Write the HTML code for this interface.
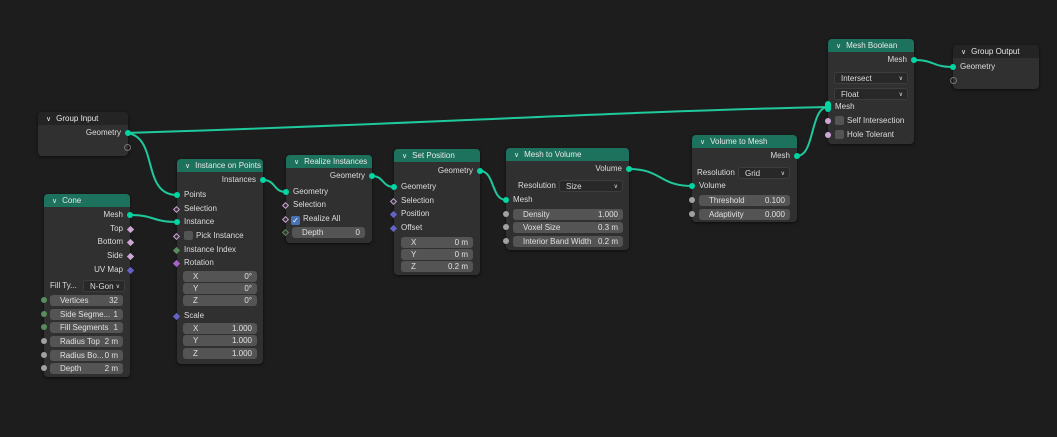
<!DOCTYPE html><html><head><style>
body{margin:0;width:1057px;height:437px;background:#1d1d1d;overflow:hidden;position:relative;font-family:"Liberation Sans",sans-serif;font-size:8px;color:#dcdcdc}
.n{position:absolute;background:#303030;border-radius:4px;box-shadow:0 1px 3px rgba(0,0,0,.6)}
.h{height:13px;line-height:13px;background:#1d725e;border-radius:4px 4px 0 0;padding-left:8px;color:#e8e8e8}
.h.g{background:#242424}
.h:before{content:"\2228";font-size:7px;margin-right:5px}
.r{position:absolute;left:0;right:0;height:12px;line-height:12px}
.o{text-align:right;padding-right:7px}
.i{padding-left:7px}
.s{position:absolute;width:6px;height:6px;border-radius:50%;top:3px}
.sl{left:-3px}.sr{right:-3px}
.d{position:absolute;width:3px;height:3px;transform:rotate(45deg);top:4px;border:1px solid;background:#303030}
.dl{left:-3px}.dr{right:-3px}
.f{position:absolute;height:11px;line-height:11px;background:#545454;border-radius:3px;padding:0 5px 0 10px;color:#e0e0e0;box-sizing:border-box}
.f span{float:right}
.dd{position:absolute;height:12px;line-height:12px;background:#282828;border:1px solid #3d3d3d;border-radius:3px;padding-left:6px;box-sizing:border-box}
.dd:after{content:"\2228";position:absolute;right:4px;font-size:6px}
.cb{display:inline-block;width:9px;height:9px;background:#545454;border-radius:2px;vertical-align:-2px;margin-right:3px}
.G{background:#00d6a3}.B{background:#cca6d6}.I{background:#598c5c}.F{background:#a1a1a1}.V{background:#6363c7}.R{background:#a663c7}
</style></head><body>
<svg width="1057" height="437" style="position:absolute;left:0;top:0" fill="none" stroke="#1fc99c" stroke-width="2">
<path d="M124 133 C400 125 600 112 828 107"/>
<path d="M124 133 C160 133 140 195 177 195"/>
<path d="M130 215 C155 215 152 222 177 222"/>
<path d="M263 180 C276 180 273 192 286 192"/>
<path d="M372 176 C384 176 382 187 394 187"/>
<path d="M480 171 C495 171 491 200 506 200"/>
<path d="M629 169 C662 169 659 186 692 186"/>
<path d="M797 156 C815 156 810 107 828 107"/>
<path d="M914 60 C935 60 932 67 953 67"/>
</svg>

<div class="n" style="left:38px;top:112px;width:90px;height:44px"><div class="h g">Group Input</div>
<div class="r o" style="top:15px">Geometry<i class="s sr G"></i></div>
<div class="r" style="top:29px"><i class="s sr" style="border:1px solid #777;width:5px;height:5px;background:none"></i></div></div>

<div class="n" style="left:177px;top:159px;width:86px;height:205px"><div class="h">Instance on Points</div>
<div class="r o" style="top:15px">Instances<i class="s sr G"></i></div>
<div class="r i" style="top:30px">Points<i class="s sl G"></i></div>
<div class="r i" style="top:44px">Selection<i class="d dl" style="border-color:#cca6d6"></i></div>
<div class="r i" style="top:57px">Instance<i class="s sl G"></i></div>
<div class="r i" style="top:71px"><i class="d dl" style="border-color:#cca6d6"></i><span class="cb"></span>Pick Instance</div>
<div class="r i" style="top:85px">Instance Index<i class="d dl I" style="border-color:#598c5c"></i></div>
<div class="r i" style="top:98px">Rotation<i class="d dl R" style="border-color:#a663c7"></i></div>
<div class="f" style="left:6px;width:74px;top:112px">X<span>0°</span></div>
<div class="f" style="left:6px;width:74px;top:124px">Y<span>0°</span></div>
<div class="f" style="left:6px;width:74px;top:136px">Z<span>0°</span></div>
<div class="r i" style="top:151px">Scale<i class="d dl V" style="border-color:#6363c7"></i></div>
<div class="f" style="left:6px;width:74px;top:164px">X<span>1.000</span></div>
<div class="f" style="left:6px;width:74px;top:176px">Y<span>1.000</span></div>
<div class="f" style="left:6px;width:74px;top:189px">Z<span>1.000</span></div></div>

<div class="n" style="left:44px;top:194px;width:86px;height:183px"><div class="h">Cone</div>
<div class="r o" style="top:15px">Mesh<i class="s sr G"></i></div>
<div class="r o" style="top:29px">Top<i class="d dr B" style="border-color:#cca6d6"></i></div>
<div class="r o" style="top:42px">Bottom<i class="d dr B" style="border-color:#cca6d6"></i></div>
<div class="r o" style="top:56px">Side<i class="d dr B" style="border-color:#cca6d6"></i></div>
<div class="r o" style="top:70px">UV Map<i class="d dr V" style="border-color:#6363c7"></i></div>
<div class="r" style="top:86px;padding-left:6px">Fill Ty...</div>
<div class="dd" style="left:39px;width:42px;top:86px">N-Gon</div>
<div class="f" style="left:6px;width:73px;top:101px">Vertices<span>32</span><i class="s I" style="left:-9px;top:2px"></i></div>
<div class="f" style="left:6px;width:73px;top:115px">Side Segme...<span>1</span><i class="s I" style="left:-9px;top:2px"></i></div>
<div class="f" style="left:6px;width:73px;top:128px">Fill Segments<span>1</span><i class="s I" style="left:-9px;top:2px"></i></div>
<div class="f" style="left:6px;width:73px;top:142px">Radius Top<span>2 m</span><i class="s F" style="left:-9px;top:2px"></i></div>
<div class="f" style="left:6px;width:73px;top:156px">Radius Bo...<span>0 m</span><i class="s F" style="left:-9px;top:2px"></i></div>
<div class="f" style="left:6px;width:73px;top:169px">Depth<span>2 m</span><i class="s F" style="left:-9px;top:2px"></i></div></div>

<div class="n" style="left:286px;top:155px;width:86px;height:88px"><div class="h">Realize Instances</div>
<div class="r o" style="top:15px">Geometry<i class="s sr G"></i></div>
<div class="r i" style="top:31px">Geometry<i class="s sl G"></i></div>
<div class="r i" style="top:44px">Selection<i class="d dl" style="border-color:#cca6d6"></i></div>
<div class="r" style="top:58px;padding-left:5px"><i class="d dl" style="border-color:#cca6d6"></i><span class="cb" style="background:#4772b3;color:#fff;font-size:8px;line-height:9px;text-align:center">✓</span>Realize All</div>
<div class="f" style="left:6px;width:73px;top:72px">Depth<span>0</span><i class="d" style="left:-9px;top:3px;border-color:#598c5c"></i></div></div>

<div class="n" style="left:394px;top:149px;width:86px;height:126px"><div class="h">Set Position</div>
<div class="r o" style="top:16px">Geometry<i class="s sr G"></i></div>
<div class="r i" style="top:32px">Geometry<i class="s sl G"></i></div>
<div class="r i" style="top:46px">Selection<i class="d dl" style="border-color:#cca6d6"></i></div>
<div class="r i" style="top:59px">Position<i class="d dl V" style="border-color:#6363c7"></i></div>
<div class="r i" style="top:73px">Offset<i class="d dl V" style="border-color:#6363c7"></i></div>
<div class="f" style="left:7px;width:72px;top:88px">X<span>0 m</span></div>
<div class="f" style="left:7px;width:72px;top:100px">Y<span>0 m</span></div>
<div class="f" style="left:7px;width:72px;top:112px">Z<span>0.2 m</span></div></div>

<div class="n" style="left:506px;top:148px;width:123px;height:102px"><div class="h">Mesh to Volume</div>
<div class="r o" style="top:15px">Volume<i class="s sr G"></i></div>
<div class="r" style="top:32px;padding-left:12px">Resolution</div>
<div class="dd" style="left:53px;width:64px;top:32px">Size</div>
<div class="r i" style="top:46px">Mesh<i class="s sl G"></i></div>
<div class="f" style="left:7px;width:110px;top:61px">Density<span>1.000</span><i class="s F" style="left:-10px;top:2px"></i></div>
<div class="f" style="left:7px;width:110px;top:74px">Voxel Size<span>0.3 m</span><i class="s F" style="left:-10px;top:2px"></i></div>
<div class="f" style="left:7px;width:110px;top:88px">Interior Band Width<span>0.2 m</span><i class="s F" style="left:-10px;top:2px"></i></div></div>

<div class="n" style="left:692px;top:135px;width:105px;height:87px"><div class="h">Volume to Mesh</div>
<div class="r o" style="top:15px">Mesh<i class="s sr G"></i></div>
<div class="r" style="top:32px;padding-left:5px">Resolution</div>
<div class="dd" style="left:46px;width:52px;top:32px">Grid</div>
<div class="r i" style="top:45px">Volume<i class="s sl G"></i></div>
<div class="f" style="left:7px;width:91px;top:60px">Threshold<span>0.100</span><i class="s F" style="left:-10px;top:2px"></i></div>
<div class="f" style="left:7px;width:91px;top:74px">Adaptivity<span>0.000</span><i class="s F" style="left:-10px;top:2px"></i></div></div>

<div class="n" style="left:828px;top:39px;width:86px;height:105px"><div class="h">Mesh Boolean</div>
<div class="r o" style="top:15px">Mesh<i class="s sr G"></i></div>
<div class="dd" style="left:6px;width:74px;top:33px">Intersect</div>
<div class="dd" style="left:6px;width:74px;top:49px">Float</div>
<div class="r i" style="top:62px">Mesh<i class="s sl G" style="height:11px;top:0;border-radius:3px"></i></div>
<div class="r i" style="top:76px"><i class="s sl B"></i><span class="cb"></span>Self Intersection</div>
<div class="r i" style="top:90px"><i class="s sl B"></i><span class="cb"></span>Hole Tolerant</div></div>

<div class="n" style="left:953px;top:45px;width:86px;height:44px"><div class="h g">Group Output</div>
<div class="r i" style="top:16px">Geometry<i class="s sl G"></i></div>
<div class="r" style="top:29px"><i class="s sl" style="border:1px solid #777;width:5px;height:5px;background:none"></i></div></div>
</body></html>
